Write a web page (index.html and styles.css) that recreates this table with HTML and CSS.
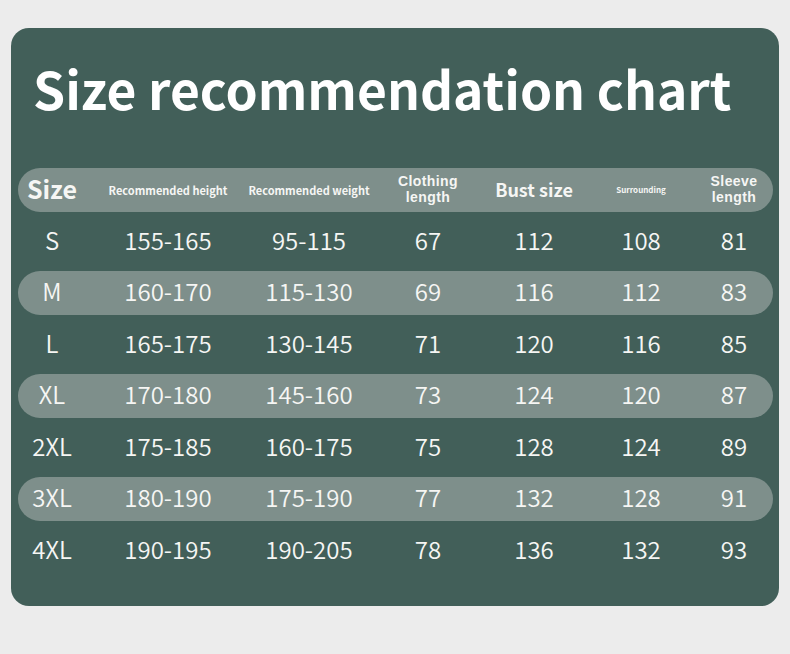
FILE: index.html
```html
<!DOCTYPE html>
<html>
<head>
<meta charset="utf-8">
<link rel="stylesheet" href="styles.css">
</head>
<body>
<div class="card">
  <h1 class="title">Size recommendation chart</h1>
  <div class="table">
    <div class="row head">
      <div class="c"><span class="h-size">Size</span></div>
      <div class="c"><span class="h-small">Recommended height</span></div>
      <div class="c"><span class="h-small">Recommended weight</span></div>
      <div class="c"><span class="h-two">Clothing<br>length</span></div>
      <div class="c"><span class="h-bust">Bust size</span></div>
      <div class="c"><span class="h-tiny">Surrounding</span></div>
      <div class="c"><span class="h-two">Sleeve<br>length</span></div>
    </div>
    <div class="row"><div class="c">S</div><div class="c">155-165</div><div class="c">95-115</div><div class="c">67</div><div class="c">112</div><div class="c">108</div><div class="c">81</div></div>
    <div class="row alt"><div class="c">M</div><div class="c">160-170</div><div class="c">115-130</div><div class="c">69</div><div class="c">116</div><div class="c">112</div><div class="c">83</div></div>
    <div class="row"><div class="c">L</div><div class="c">165-175</div><div class="c">130-145</div><div class="c">71</div><div class="c">120</div><div class="c">116</div><div class="c">85</div></div>
    <div class="row alt"><div class="c">XL</div><div class="c">170-180</div><div class="c">145-160</div><div class="c">73</div><div class="c">124</div><div class="c">120</div><div class="c">87</div></div>
    <div class="row"><div class="c">2XL</div><div class="c">175-185</div><div class="c">160-175</div><div class="c">75</div><div class="c">128</div><div class="c">124</div><div class="c">89</div></div>
    <div class="row alt"><div class="c">3XL</div><div class="c">180-190</div><div class="c">175-190</div><div class="c">77</div><div class="c">132</div><div class="c">128</div><div class="c">91</div></div>
    <div class="row"><div class="c">4XL</div><div class="c">190-195</div><div class="c">190-205</div><div class="c">78</div><div class="c">136</div><div class="c">132</div><div class="c">93</div></div>
  </div>
</div>
</body>
</html>
```
FILE: styles.css
```css
html, body {
  margin: 0;
  padding: 0;
  background: #ececec;
}
body {
  padding: 28px 11px 0 11px;
  font-family: "Noto Sans CJK SC", "Noto Sans", sans-serif;
  color: #f6f6f4;
}
.card {
  width: 768px;
  height: 578px;
  box-sizing: border-box;
  background: #425f59;
  border-radius: 18px;
  padding: 0 7px 0 7px;
}
.title {
  margin: 0;
  padding: 30px 0 0 15px;
  height: 140px;
  box-sizing: border-box;
  font-size: 51.5px;
  font-weight: 700;
  line-height: 60px;
  color: #ffffff;
}
.table {
  display: flex;
  flex-direction: column;
  gap: 7.5px;
  width: 755px;
}
.row {
  display: grid;
  grid-template-columns: 68px 164px 118px 120px 92px 122px 64px 7px;
  height: 44px;
  box-sizing: border-box;
  padding-bottom: 4px;
  border-radius: 22px;
  align-items: center;
  font-size: 24px;
  font-weight: 350;
}
.row.head {
  padding-bottom: 0;
}
.row.head, .row.alt {
  background: #7e8f8b;
}
.c {
  display: flex;
  justify-content: center;
  align-items: center;
  white-space: nowrap;
  min-width: 0;
  line-height: 1;
}
.h-size {
  font-size: 25px;
  font-weight: 700;
  padding-bottom: 3px;
}
.h-small {
  font-size: 11px;
  font-weight: 700;
}
.h-two {
  font-family: "Liberation Sans", Arial, sans-serif;
  font-size: 14px;
  font-weight: 700;
  line-height: 15.7px;
  text-align: center;
  letter-spacing: 0.4px;
}
.h-bust {
  font-size: 18px;
  font-weight: 700;
  padding-bottom: 2px;
}
.h-tiny {
  font-size: 8px;
  font-weight: 700;
}
```
